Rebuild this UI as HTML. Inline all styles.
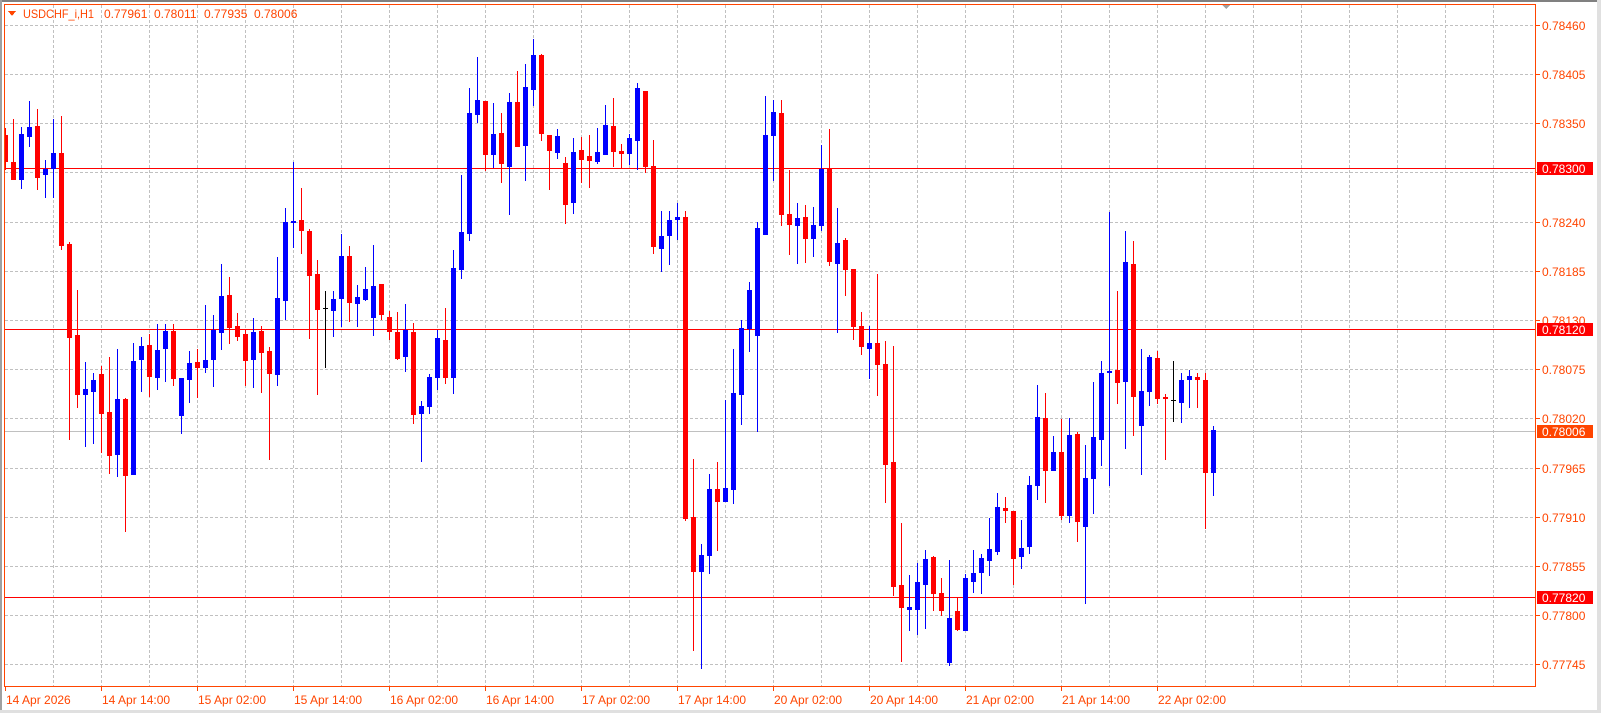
<!DOCTYPE html>
<html><head><meta charset="utf-8">
<style>
html,body{margin:0;padding:0;background:#fff;}
svg{display:block;}
text{font-family:"Liberation Sans",sans-serif;font-size:12px;}
</style></head>
<body>
<svg id="c" width="1601" height="713" xmlns="http://www.w3.org/2000/svg" shape-rendering="crispEdges">
<rect x="0" y="0" width="1601" height="713" fill="#fff"/>
<rect x="0" y="0" width="1601" height="2" fill="#808080"/>
<rect x="0" y="0" width="2" height="713" fill="#a0a0a0"/>
<rect x="0" y="710" width="1601" height="3" fill="#e0e0e0"/>
<rect x="1597" y="0" width="4" height="713" fill="#e0e0e0"/>
<g id="grid" stroke="#c0c0c0" stroke-width="1" stroke-dasharray="3,2"></g>
<g id="lines"></g>
<g id="candles"></g>
<rect x="4.5" y="4.5" width="1531" height="682" fill="none" stroke="#FF4500" stroke-width="1"/>
<g id="axis" fill="#FF4500"></g>
<polygon points="1222,5 1230,5 1226,9" fill="#a0a0a0"/>
<polygon points="8,11 16,11 12,16" fill="#FF4500"/>
<text x="23" y="18" fill="#FF4500" textLength="71" lengthAdjust="spacingAndGlyphs">USDCHF_i,H1</text>
<text x="104" y="18" fill="#FF4500">0.77961</text>
<text x="154" y="18" fill="#FF4500">0.78011</text>
<text x="204" y="18" fill="#FF4500">0.77935</text>
<text x="254" y="18" fill="#FF4500">0.78006</text>
</svg>
<script>
(function(){
var NS="http://www.w3.org/2000/svg";
function el(p,t,a,txt){var e=document.createElementNS(NS,t);for(var k in a)e.setAttribute(k,a[k]);if(txt!=null)e.textContent=txt;p.appendChild(e);return e;}
var grid=document.getElementById('grid'),lines=document.getElementById('lines'),cg=document.getElementById('candles'),ax=document.getElementById('axis');
function py(p){return 24.7+(0.78460-p)/0.00055*49.2;}
for(var n=0;n<=13;n++){
  var p=0.78460-n*0.00055, y=Math.round(24.7+49.2*n)+0.5;
  el(grid,'line',{x1:5,x2:1535,y1:y,y2:y});
  el(ax,'rect',{x:1536,y:Math.floor(y),width:4,height:1});
  if(Math.abs(p-0.78295)>0.00001) el(ax,'text',{x:1542,y:Math.floor(y)+5},p.toFixed(5));
}
for(var n=1;n<=31;n++){var x=5+48*n+0.5;el(grid,'line',{x1:x,x2:x,y1:5,y2:686});}
var tl=["14 Apr 2026","14 Apr 14:00","15 Apr 02:00","15 Apr 14:00","16 Apr 02:00","16 Apr 14:00","17 Apr 02:00","17 Apr 14:00","20 Apr 02:00","20 Apr 14:00","21 Apr 02:00","21 Apr 14:00","22 Apr 02:00"];
for(var i=0;i<tl.length;i++){var x=5+96*i;el(ax,'rect',{x:x,y:687,width:1,height:4});el(ax,'text',{x:x+1,y:704},tl[i]);}
var hl=[[0.78300,'0.78300','#FF0000'],[0.78120,'0.78120','#FF0000'],[0.77820,'0.77820','#FF0000']];
el(lines,'rect',{x:5,y:Math.round(py(0.78006)),width:1531,height:1,fill:'#c0c0c0'});
hl.forEach(function(h){el(lines,'rect',{x:5,y:Math.round(py(h[0])),width:1531,height:1,fill:h[2]});});
function box(p,t,c){var y=Math.round(py(p));el(ax,'rect',{x:1537,y:y-6,width:56,height:13,fill:c});el(ax,'text',{x:1542,y:y+5,fill:'#fff'},t);}
box(0.78300,'0.78300','#FF0000');box(0.78120,'0.78120','#FF0000');box(0.77820,'0.77820','#FF0000');box(0.78006,'0.78006','#FF4500');
var A=[['R',125,132,158,166],['R',117,159,176,176],['B',124,131,176,185],['B',99,124,133,143],['R',107,123,174,186],['B',157,166,171,193],['B',117,150,165,193],['R',114,150,241,245],['R',238,240,331,432],['R',285,329,388,400],['B',356,383,388,439],['B',367,374,385,436],['R',360,368,406,445],['R',351,405,448,465],['B',343,393,447,468],['R',392,393,467,523],['B',337,355,466,466],['B',331,340,353,385],['R',328,339,370,390],['B',319,344,371,383],['B',319,326,342,375],['R',319,326,372,379],['B',372,372,408,426],['B',345,357,373,396],['R',343,356,361,391],['B',300,354,361,366],['B',310,325,353,380],['B',259,291,327,343],['R',272,290,322,337],['R',308,321,330,334],['R',324,328,354,379],['B',313,327,353,381],['R',321,326,346,386],['R',341,345,367,452],['B',253,293,368,379],['B',204,218,295,314],['B',159,217,218,243]];
var B=[['R',187,219,229,252],['R',228,230,274,337],['R',259,273,308,393],['K',290,307,307,366],['B',290,298,309,335],['B',233,255,297,325],['R',245,255,301,320],['B',284,296,302,325],['B',266,288,298,299],['B',244,285,316,334],['R',283,283,313,318],['R',310,316,330,338],['R',311,331,357,358],['B',303,329,355,370],['R',322,331,413,422],['B',400,405,412,460],['B',373,376,405,412],['B',329,337,376,388],['R',307,339,376,382],['B',249,267,376,392],['B',174,231,268,277],['B',87,112,232,239],['B',56,99,113,121],['R',100,100,153,169],['B',102,133,153,166],['R',112,132,162,181],['B',92,101,165,213],['R',70,101,145,145],['B',63,86,144,179],['B',38,54,88,104],['R',53,54,132,139],['R',134,134,149,188],['B',128,135,151,157],['R',156,162,203,222],['B',137,151,201,212]];
var C=[['R',200,235,258,318],['R',196,251,260,330],['B',178,240,264,268],['B',118,170,245,245],['R',99,172,238,276],['R',220,237,242,280],['B',194,204,242,272],['B',60,73,208,284],['R',80,80,277,292],['R',209,277,486,503],['B',395,460,490,550],['B',395,416,456,532],['B',374,410,415,468],['R',395,410,1195,1200],['R',1040,1193,1334,1538],['B',1262,1290,1332,1586],['B',1079,1119,1290,1338],['R',1048,1119,1150,1278],['B',886,1116,1150,1150],['B',755,868,1118,1155],['B',677,700,872,950],['B',580,601,700,760],['B',423,439,718,967],['B',94,196,454,454],['B',105,136,196,314],['R',105,139,402,430],['R',288,402,428,507],['B',374,413,430,530],['R',379,410,465,527],['B',382,431,465,512],['B',222,285,430,443],['R',180,285,524,535],['B',387,476,530,710],['R',463,470,544,613],['R',544,544,694,728],['R',656,694,745,767],['B',695,737,750,830]];
var D=[['R',218,426,489,582],['R',420,489,791,905],['R',435,786,1157,1185],['R',968,1155,1220,1384],['B',1125,1220,1226,1292],['B',1088,1146,1226,1302],['B',1050,1077,1151,1286],['R',1068,1071,1178,1230],['R',1133,1179,1229,1244],['B',1080,1253,1387,1395],['R',1192,1233,1287,1290],['B',1122,1134,1290,1290],['B',1050,1118,1143,1176],['B',1062,1074,1116,1179],['B',954,1047,1080,1125],['B',879,920,1052,1062],['R',891,924,930,966],['R',932,932,1073,1152],['B',960,1044,1068,1104],['B',828,855,1038,1059],['B',552,648,855,897],['R',578,651,810,906],['B',708,756,810,810],['R',657,756,945,957],['B',651,705,945,966],['R',696,702,963,1023]];
var E=[['B',765,864,1007,1238],['B',573,741,863,968],['B',510,546,746,825],['B',62,541,545,885],['R',300,537,575,638],['B',120,213,572,773],['R',150,219,617,735],['B',474,600,704,851],['B',494,498,602,644],['R',480,501,623,638],['R',609,618,623,806],['K',510,628,628,692],['B',546,567,635,695],['B',537,555,566,648],['R',546,558,566,648],['R',546,567,845,1014],['B',708,720,845,914]];
var all=[];
A.forEach(function(d){all.push([d[0]].concat(d.slice(1).map(function(v){return 167.8+(3*v-494)/2.957;})));});
B.forEach(function(d){all.push([d[0]].concat(d.slice(1).map(function(v){return v+0.8;})));});
C.forEach(function(d){all.push([d[0]].concat(d.slice(1).map(function(z){return 167.8+(z-281)/2.609;})));});
D.forEach(function(d){all.push([d[0]].concat(d.slice(1).map(function(z){return 328.8+(z-384)/3.01;})));});
E.forEach(function(d){all.push([d[0]].concat(d.slice(1).map(function(z){return 328.8+(z-414)/3.01;})));});
var col={R:'#FF0000',B:'#0000FF',K:'#000000'};
all.forEach(function(d,k){
  var cx=5+8*k,c=col[d[0]];
  var hi=Math.round(d[1]),bt=Math.round(d[2]),bb=Math.round(d[3]),lo=Math.round(d[4]);
  if(lo<bb)lo=bb; if(hi>bt)hi=bt;
  el(cg,'rect',{x:cx,y:hi,width:1,height:Math.max(1,lo-hi+1),fill:c});
  var bx=cx-2,bw=5; if(cx-2<5){bx=5;bw=cx+3-5;}
  el(cg,'rect',{x:bx,y:bt,width:bw,height:Math.max(1,bb-bt+ (d[0]=='K'?0:1)),fill:c});
});
})();
</script>
</body></html>
